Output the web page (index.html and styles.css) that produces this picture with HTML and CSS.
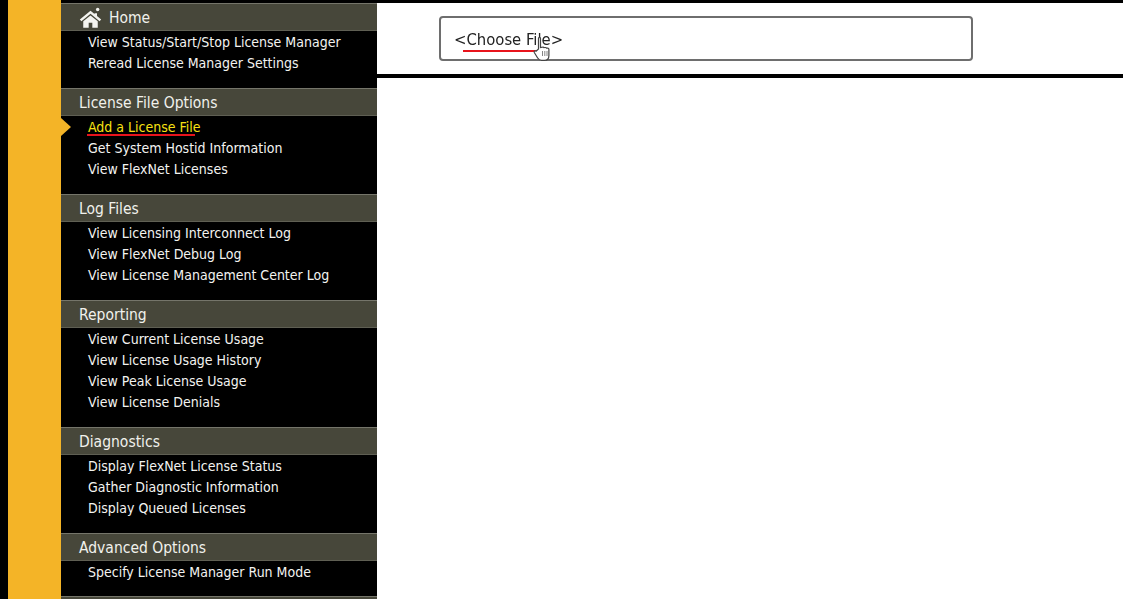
FILE: index.html
```html
<!DOCTYPE html>
<html lang="en">
<head>
<meta charset="utf-8">
<title>License Administration</title>
<link rel="stylesheet" href="styles.css">
</head>
<body>
<div class="page">
  <div class="edge"></div>
  <div class="rail"></div>
  <nav class="sidebar">
    <section class="group">
      <h2 class="head head-home">
        <svg class="home-icon" viewBox="0 0 24 22" width="23" height="21" aria-hidden="true">
          <path class="home-shape" d="M12 3.800 .8 13.200l1.700 1.800L12 7.200l9.500 7.800 1.700-1.800L18.800 9.500V6.500h-2.600v.9L12 3.800Z"/>
          <path class="home-shape" d="M12 8.800 4.400 14.800V21.800h5.700v-5.300h3.800v5.300h5.700V14.800Z"/>
          <circle class="home-shape" cx="19.500" cy="2.700" r="1.800"/>
        </svg>
        Home
      </h2>
      <a class="item">View Status/Start/Stop License Manager</a>
      <a class="item">Reread License Manager Settings</a>
    </section>
    <section class="group">
      <h2 class="head">License File Options</h2>
      <a class="item item-active">Add a License File<span class="marker"></span><span class="red-line red-line-nav"></span></a>
      <a class="item">Get System Hostid Information</a>
      <a class="item">View FlexNet Licenses</a>
    </section>
    <section class="group">
      <h2 class="head">Log Files</h2>
      <a class="item">View Licensing Interconnect Log</a>
      <a class="item">View FlexNet Debug Log</a>
      <a class="item">View License Management Center Log</a>
    </section>
    <section class="group">
      <h2 class="head">Reporting</h2>
      <a class="item">View Current License Usage</a>
      <a class="item">View License Usage History</a>
      <a class="item">View Peak License Usage</a>
      <a class="item">View License Denials</a>
    </section>
    <section class="group">
      <h2 class="head">Diagnostics</h2>
      <a class="item">Display FlexNet License Status</a>
      <a class="item">Gather Diagnostic Information</a>
      <a class="item">Display Queued Licenses</a>
    </section>
    <section class="group">
      <h2 class="head">Advanced Options</h2>
      <a class="item">Specify License Manager Run Mode</a>
    </section>
    <section class="group">
      <h2 class="head"></h2>
    </section>
  </nav>
  <main class="main">
    <div class="panel">
      <div class="file-box">
        <span class="file-label">&lt;Choose File&gt;<span class="red-line red-line-file"></span>
          <svg class="cursor" viewBox="0 0 17 26" width="17" height="26" aria-hidden="true">
            <path class="cursor-shape" d="M5.500 13V2.500C5.500 1 7.500 1 7.500 2.500V11.500l2-.4c.8-.2 1.300.1 1.500.6l1.200-.2c.8-.1 1.200.2 1.400.7l.8-.1c1-.1 1.500.5 1.500 1.400v6c0 2.800-1.800 4.900-4.500 4.900H8.500c-2 0-3-1-4-2.700L1.300 16.500c-.6-1.100.8-2.200 1.800-1.300Z"/>
            <path class="cursor-lines" d="M9.500 15v5M11.800 15v5M14 15v5"/>
          </svg>
        </span>
      </div>
    </div>
  </main>
</div>
</body>
</html>
```
FILE: styles.css
```css
* { box-sizing: border-box; }
html, body { margin: 0; height: 100%; overflow: hidden; background: #fff; }
.page {
  display: flex;
  width: 1123px;
  height: 599px;
  overflow: hidden;
  font-family: "DejaVu Sans", "Noto Sans", sans-serif;
  font-stretch: condensed;
  filter: blur(0.3px);
}
.edge { flex: 0 0 8px; background: #000; }
.rail { flex: 0 0 53px; background: #f4b427; }
.sidebar {
  flex: 0 0 316px;
  height: 599px;
  overflow: hidden;
  padding-top: 3px;
  background: #000;
}
.group { padding-bottom: 14.4px; }
.head {
  display: flex;
  align-items: center;
  height: 28px;
  margin: 0;
  padding: 3px 0 0 18px;
  color: #f1f1ec;
  background: #47473a;
  border-top: 1px solid #75756a;
  border-bottom: 1px solid #5f5f53;
  font-size: 15.500px;
  font-weight: 400;
}
.head-home { gap: 7px; padding-top: 1px; }
.home-icon { flex: none; margin-top: -1px; }
.home-shape { fill: #f4f4f0; }
.item {
  position: relative;
  display: block;
  height: 21.2px;
  padding: 0.9px 0 0 27px;
  color: #f3f3f0;
  font-size: 14px;
  line-height: 21.2px;
  white-space: nowrap;
}
.item-active { color: #f7e012; }
.marker {
  position: absolute;
  left: 0;
  top: 2px;
  border-left: 10px solid #f4b427;
  border-top: 9px solid transparent;
  border-bottom: 9px solid transparent;
}
.red-line { position: absolute; height: 2px; background: #e8141c; }
.red-line-nav { left: 26px; top: 18px; width: 108px; }
.main { flex: 1; min-width: 0; }
.panel {
  height: 78px;
  padding: 13px 0 0 62px;
  background: #fff;
  border-top: 3px solid #000;
  border-bottom: 4px solid #000;
}
.file-box {
  width: 534px;
  height: 45px;
  padding: 0 0 0 13px;
  display: flex;
  align-items: center;
  border: 2px solid #6e6e6e;
  border-radius: 4px;
}
.file-label {
  position: relative;
  top: 1px;
  color: #222;
  font-size: 16.500px;
  line-height: 24px;
}
.red-line-file { left: 9px; top: 22px; width: 78px; }
.cursor { position: absolute; left: 79px; top: 8px; }
.cursor-shape { fill: #fff; stroke: #444; stroke-width: 1.200; }
.cursor-lines { fill: none; stroke: #666; stroke-width: 0.800; }
```
